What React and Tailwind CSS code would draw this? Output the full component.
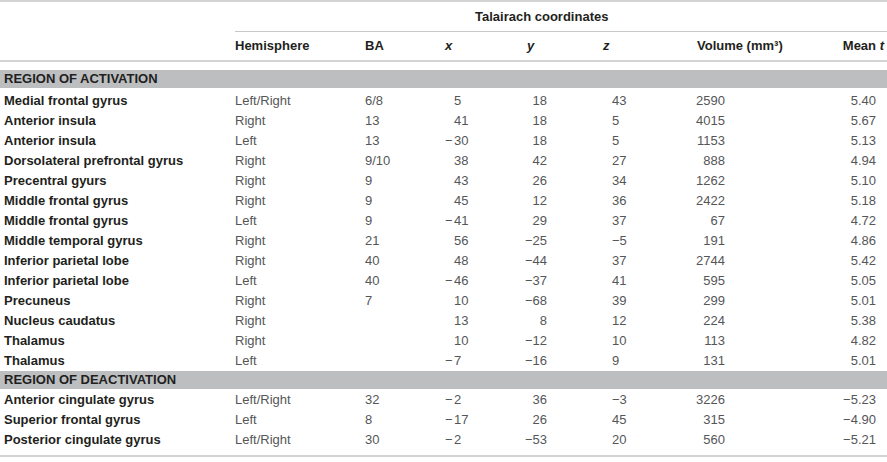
const activation = [
  ["Medial frontal gyrus", "Left/Right", "6/8", "5", "18", "43", "2590", "5.40"],
  ["Anterior insula", "Right", "13", "41", "18", "5", "4015", "5.67"],
  ["Anterior insula", "Left", "13", "−30", "18", "5", "1153", "5.13"],
  ["Dorsolateral prefrontal gyrus", "Right", "9/10", "38", "42", "27", "888", "4.94"],
  ["Precentral gyurs", "Right", "9", "43", "26", "34", "1262", "5.10"],
  ["Middle frontal gyrus", "Right", "9", "45", "12", "36", "2422", "5.18"],
  ["Middle frontal gyrus", "Left", "9", "−41", "29", "37", "67", "4.72"],
  ["Middle temporal gyrus", "Right", "21", "56", "−25", "−5", "191", "4.86"],
  ["Inferior parietal lobe", "Right", "40", "48", "−44", "37", "2744", "5.42"],
  ["Inferior parietal lobe", "Left", "40", "−46", "−37", "41", "595", "5.05"],
  ["Precuneus", "Right", "7", "10", "−68", "39", "299", "5.01"],
  ["Nucleus caudatus", "Right", "", "13", "8", "12", "224", "5.38"],
  ["Thalamus", "Right", "", "10", "−12", "10", "113", "4.82"],
  ["Thalamus", "Left", "", "−7", "−16", "9", "131", "5.01"]
]

const deactivation = [
  ["Anterior cingulate gyrus", "Left/Right", "32", "−2", "36", "−3", "3226", "−5.23"],
  ["Superior frontal gyrus", "Left", "8", "−17", "26", "45", "315", "−4.90"],
  ["Posterior cingulate gyrus", "Left/Right", "30", "−2", "−53", "20", "560", "−5.21"]
]

const cols = "grid grid-cols-[235px_130px_75px_60px_50px_100px_75px_151px]"

const Row = ({ r }) => {
  const neg = r[3].startsWith("−")
  return (
    <div className={`${cols} h-[20px] items-center text-[13px] text-[#555658]`}>
      <div className="pl-[4px] font-bold text-[#231f20] whitespace-nowrap">{r[0]}</div>
      <div>{r[1]}</div>
      <div>{r[2]}</div>
      <div className="pl-[14px]">
        {neg && <span className="inline-block w-[9px] -ml-[9px]">−</span>}
        {neg ? r[3].slice(1) : r[3]}
      </div>
      <div className="text-right pr-[3px]">{r[4]}</div>
      <div className="pl-[62px]">{r[5]}</div>
      <div className="text-right">{r[6]}</div>
      <div className="text-right">{r[7]}</div>
    </div>
  )
}

const Band = ({ label }) => (
  <div className="h-[18px] flex items-center bg-[#bcbec0] pl-[4px] text-[13px] font-bold text-[#231f20]">
    {label}
  </div>
)

export default function App() {
  return (
    <div className="w-[887px] h-[462px] bg-white font-['Liberation_Sans',Arial,sans-serif] overflow-hidden">
      <div className="h-[2px] bg-[#d1d3d4]" />

      {/* Talairach header */}
      <div className="flex h-[30px]">
        <div className="w-[235px]" />
        <div className="flex-1 border-b border-[#c7c8ca] pt-[5px] text-[13px] font-bold text-[#231f20]">
          <span className="ml-[240px]">Talairach coordinates</span>
        </div>
      </div>

      {/* Column headers */}
      <div className={`${cols} h-[30px] items-center text-[13px] font-bold text-[#231f20] border-b-2 border-[#d1d3d4]`}>
        <div />
        <div>Hemisphere</div>
        <div>BA</div>
        <div className="pl-[5px] italic">x</div>
        <div className="pl-[27px] italic">y</div>
        <div className="pl-[53px] italic">z</div>
        <div className="pl-[47px] whitespace-nowrap">Volume (mm³)</div>
        <div className="flex justify-end">
          <span className="-mr-[8px] whitespace-nowrap">Mean <i>t</i></span>
        </div>
      </div>

      <div className="mt-[8px]">
        <Band label="REGION OF ACTIVATION" />
        <div className="pt-[3px]">
          {activation.map((r, i) => (
            <Row key={i} r={r} />
          ))}
        </div>
        <Band label="REGION OF DEACTIVATION" />
        <div className="pt-[1px]">
          {deactivation.map((r, i) => (
            <Row key={i} r={r} />
          ))}
        </div>
      </div>

      <div className="mt-[5px] h-[2px] bg-[#d1d3d4]" />
    </div>
  )
}
